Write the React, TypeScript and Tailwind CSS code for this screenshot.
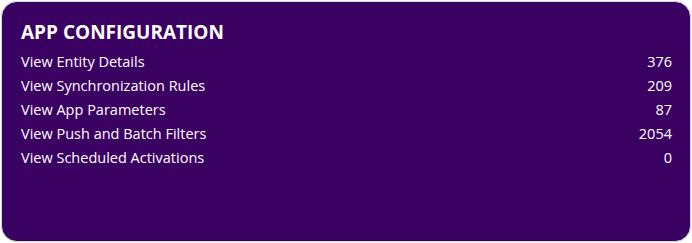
export default function App() {
  const rows: [string, string][] = [
    ["View Entity Details", "376"],
    ["View Synchronization Rules", "209"],
    ["View App Parameters", "87"],
    ["View Push and Batch Filters", "2054"],
    ["View Scheduled Activations", "0"],
  ];
  return (
    <div className="w-[692px] h-[243px] bg-white p-px" style={{ fontFamily: '"Open Sans", sans-serif' }}>
      <div className="h-full rounded-[16px] bg-[#3a0062] border border-[#d8d8d8] pl-[19px] pr-[18px] pt-[16px] text-white">
        <h2 className="text-[19px] leading-[28px] font-bold">APP CONFIGURATION</h2>
        <div className="mt-[4px] flex flex-col">
          {rows.map(([label, value]) => (
            <div key={label} className="flex justify-between text-[14.5px] leading-[24px]">
              <span>{label}</span>
              <span>{value}</span>
            </div>
          ))}
        </div>
      </div>
    </div>
  );
}
